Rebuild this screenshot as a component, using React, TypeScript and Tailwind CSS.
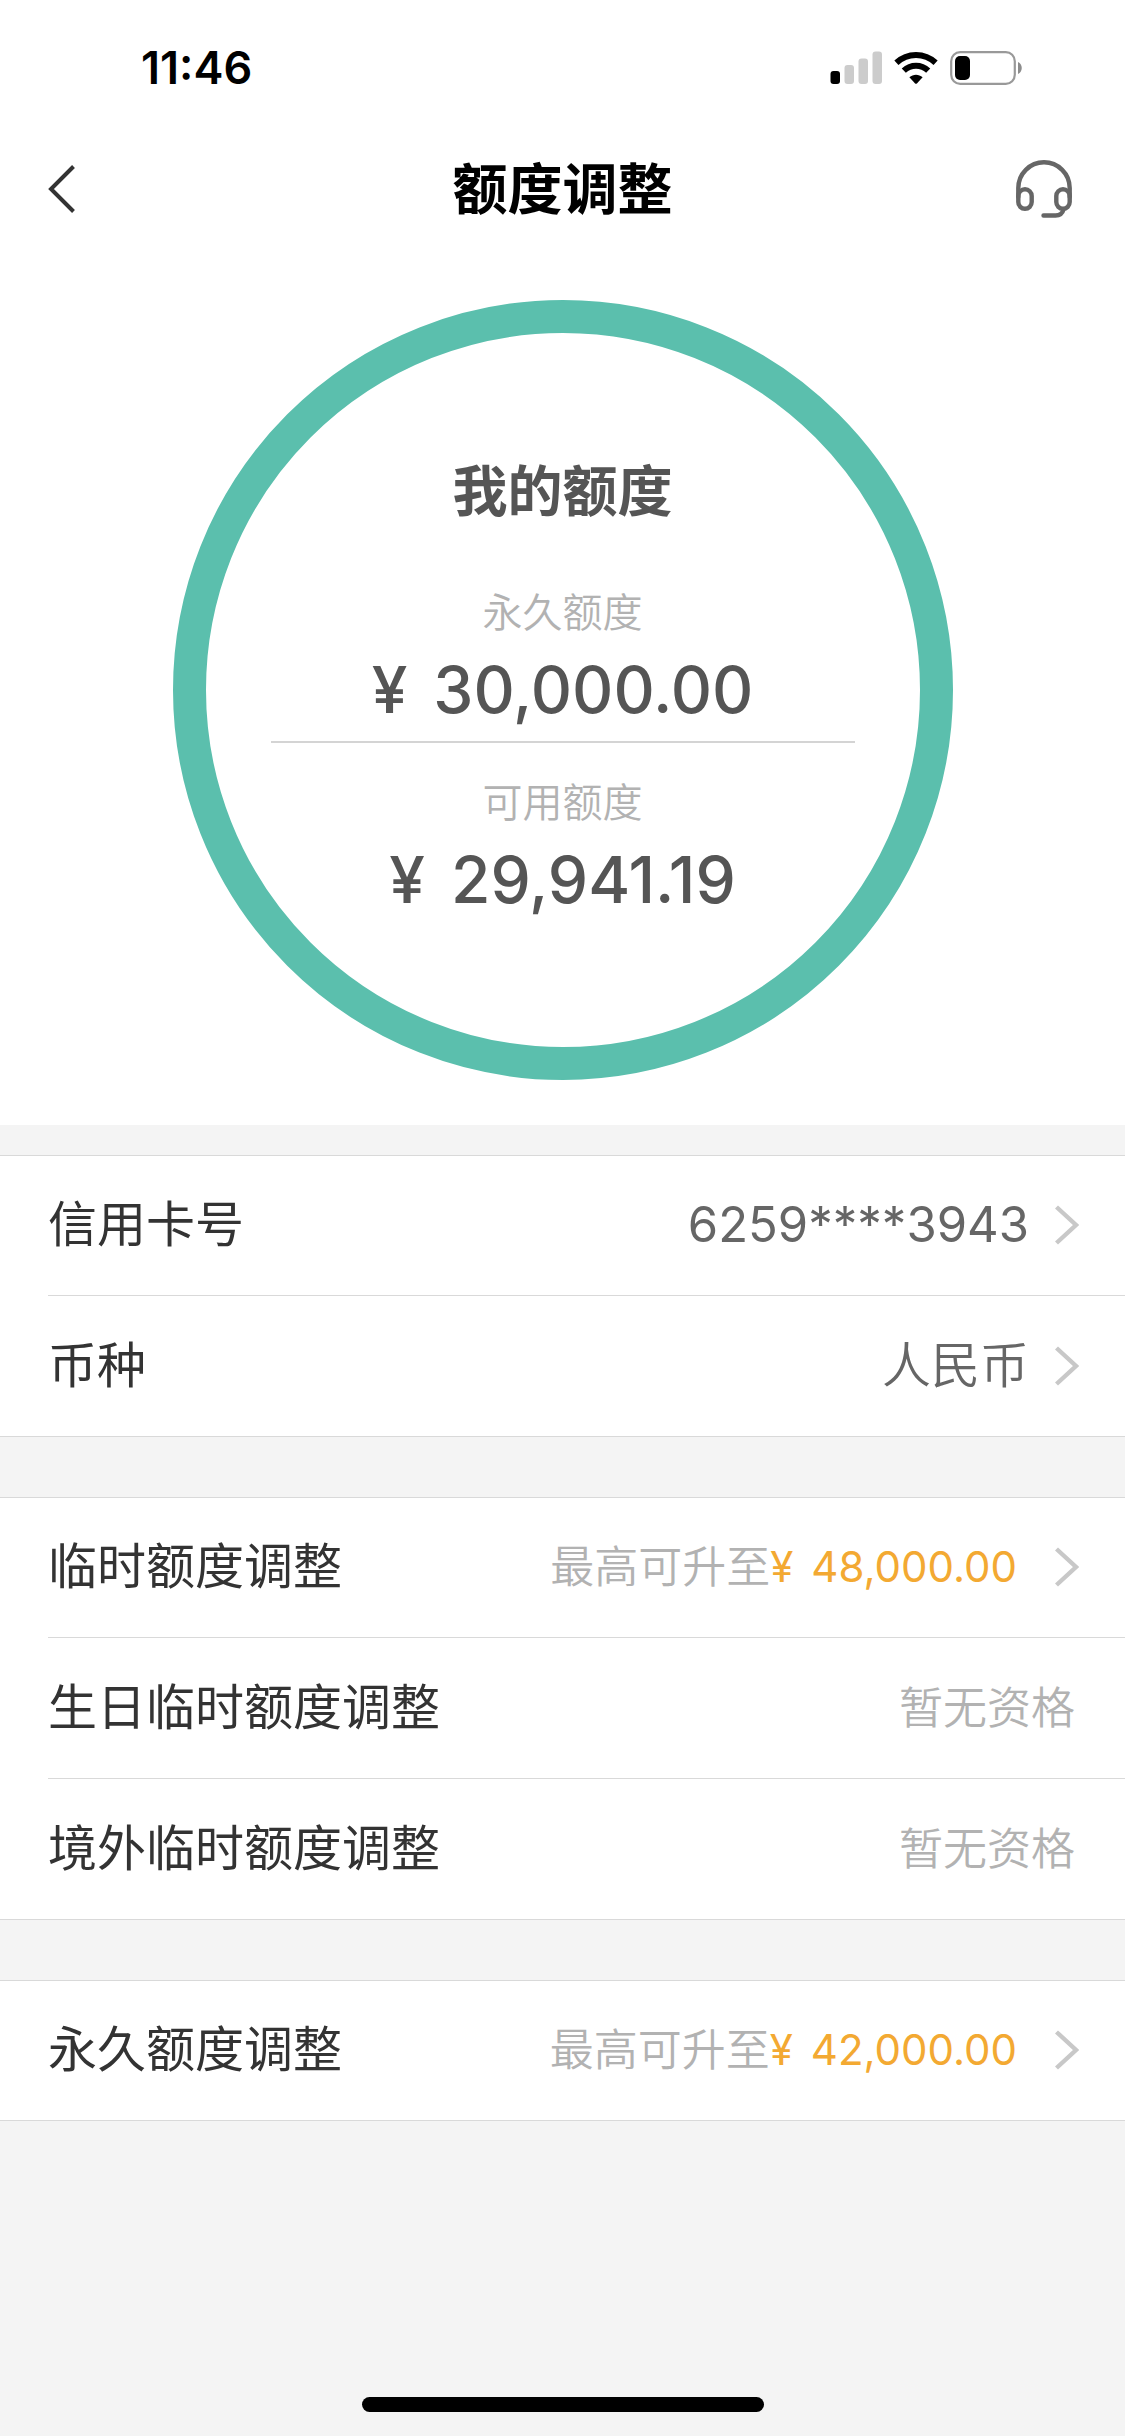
import React from "react";

function SignalIcon() {
  return (
    <svg className="h-[34px] w-[52px]" viewBox="0 0 52 34" aria-hidden="true">
      <rect x="0.5" y="20" width="9.5" height="13" rx="3" fill="#000" />
      <rect x="14.5" y="14" width="9.5" height="19" rx="3" fill="#ccc" />
      <rect x="28.5" y="7.5" width="9.5" height="25.5" rx="3" fill="#ccc" />
      <rect x="42.5" y="0.5" width="9.5" height="32.5" rx="3" fill="#ccc" />
    </svg>
  );
}

function WifiIcon() {
  return (
    <svg className="h-[34px] w-[44px]" viewBox="0 0 44 34" aria-hidden="true">
      <g fill="none" stroke="#000" strokeWidth="6">
        <path d="M2.4 11.8C13.5 1.4 30.5 1.4 41.6 11.8" />
        <path d="M9.8 19.6C16.8 13 27.2 13 34.2 19.6" />
      </g>
      <path d="M15.4 26.3C19.2 22.8 24.8 22.8 28.6 26.3L22.9 32.4Q22 33.3 21.1 32.4Z" fill="#000" />
    </svg>
  );
}

function BatteryIcon() {
  return (
    <svg className="h-[34px] w-[72px]" viewBox="0 0 72 34" aria-hidden="true">
      <rect x="1.2" y="1.2" width="63.6" height="31.6" rx="9" fill="none" stroke="#999" strokeWidth="2.2" />
      <rect x="5" y="5" width="15" height="24" rx="5" fill="#000" />
      <path d="M68 11C73 13 73 21 68 23Z" fill="#8c8c8c" />
    </svg>
  );
}

function HeadsetIcon() {
  return (
    <svg className="h-[58px] w-[56px]" viewBox="0 0 56 58" fill="none" stroke="#666" strokeWidth="4.4" strokeLinecap="round" aria-hidden="true">
      <path d="M2.3 37V28A25.7 25.7 0 0 1 53.7 28V37" />
      <rect x="2.3" y="29.3" width="13.4" height="19.5" rx="6.7" />
      <rect x="40.3" y="29.3" width="13.4" height="19.5" rx="6.7" />
      <path d="M47.5 49.5Q46 55.5 39.5 55.5H27.5" />
    </svg>
  );
}

function BackIcon() {
  return (
    <svg className="h-[48px] w-[28px]" viewBox="0 0 28 48" fill="none" stroke="#333" strokeWidth="4" aria-hidden="true">
      <path d="M25.5 1.5L3 24L25.5 46.5" />
    </svg>
  );
}

function ChevronIcon() {
  return (
    <svg className="h-[40px] w-[24px] shrink-0" viewBox="0 0 24 40" fill="none" stroke="#c8c8c8" strokeWidth="4.4" aria-hidden="true">
      <path d="M1.5 2L21 20L1.5 38" />
    </svg>
  );
}

type Item = {
  label: string;
  number?: string;
  value?: string;
  note?: string;
  amount?: string;
};

const groups: Item[][] = [
  [
    { label: "信用卡号", number: "6259****3943" },
    { label: "币种", value: "人民币" },
  ],
  [
    { label: "临时额度调整", note: "最高可升至", amount: "48,000.00" },
    { label: "生日临时额度调整", note: "暂无资格" },
    { label: "境外临时额度调整", note: "暂无资格" },
  ],
  [{ label: "永久额度调整", note: "最高可升至", amount: "42,000.00" }],
];

const limits = [
  { label: "永久额度", amount: "30,000.00" },
  { label: "可用额度", amount: "29,941.19" },
];

function Row({ item, first }: { item: Item; first: boolean }) {
  const size = first ? "min-h-[139px]" : "min-h-[140px] border-t border-[#d9d9d9]";
  const line = "flex w-full items-center justify-between pb-px text-left ";
  const label = <span className="text-[49px] leading-[60px] text-[#333]">{item.label}</span>;

  if (item.note && !item.amount) {
    return (
      <li className={"flex box-content " + size}>
        <div className={line + "pr-[50px]"}>
          {label}
          <span className="text-[44px] leading-[60px] font-[350] text-[#b2b2b2]">{item.note}</span>
        </div>
      </li>
    );
  }

  return (
    <li className={"flex box-content " + size}>
      <button type="button" className={line + "pr-[46px]"}>
        {label}
        {item.amount ? (
          <span className="flex items-center gap-[38px] text-[44px] leading-[60px] font-[350] text-[#b2b2b2]">
            <span className="flex items-center">
              {item.note}
              <span className="flex gap-[18px] text-[42px] font-normal text-[#f3a932]">
                <span>¥</span>
                <span>{item.amount}</span>
              </span>
            </span>
            <ChevronIcon />
          </span>
        ) : (
          <span className="flex items-center gap-[26px] text-[49px] leading-[60px] text-[#666]">
            {item.number && <span>{item.number}</span>}
            {item.value && <span className="font-[350]">{item.value}</span>}
            <ChevronIcon />
          </span>
        )}
      </button>
    </li>
  );
}

export default function App() {
  return (
    <div className="flex min-h-screen flex-col bg-[#f4f4f4] font-['Inter','Noto_Sans_CJK_SC',sans-serif]">
      <div className="bg-white pb-[45px]">
        <div className="flex h-[136px] items-center justify-between pr-[103px] pl-[141px]">
          <time className="text-[45px] leading-[60px] font-semibold text-black">11:46</time>
          <div className="flex items-center gap-3">
            <SignalIcon />
            <WifiIcon />
            <BatteryIcon />
          </div>
        </div>

        <header className="grid h-[108px] grid-cols-[1fr_auto_1fr] items-center pb-0.5">
          <button type="button" aria-label="返回" className="justify-self-start pl-12">
            <BackIcon />
          </button>
          <h1 className="text-[55px] leading-[72px] font-bold text-black">额度调整</h1>
          <button type="button" aria-label="客服" className="justify-self-end pr-[53px]">
            <HeadsetIcon />
          </button>
        </header>

        <section className="mx-auto mt-14 flex size-[780px] flex-col items-center rounded-full border-[33px] border-[#5bbfad] pt-[122px] text-center">
          <h2 className="text-[55px] leading-[72px] font-bold text-[#555]">我的额度</h2>
          <dl className="mt-14 w-[584px] divide-y-2 divide-[#d4d4d4]">
            {limits.map((limit) => (
              <div key={limit.label} className="pb-[11px] not-first:pt-[30px]">
                <dt className="text-[40px] leading-[60px] font-[350] text-[#b2b2b2]">{limit.label}</dt>
                <dd className="mt-[7px] flex justify-center gap-[26px] text-[64px] leading-[80px] font-[550] text-[#555]">
                  <span>¥</span>
                  <span>{limit.amount}</span>
                </dd>
              </div>
            ))}
          </dl>
        </section>
      </div>

      <main className="mt-[30px] flex flex-col gap-[60px]">
        {groups.map((items) => (
          <ul key={items[0].label} className="border-y border-[#d9d9d9] bg-white pl-12">
            {items.map((item, index) => (
              <Row key={item.label} item={item} first={index === 0} />
            ))}
          </ul>
        ))}
      </main>

      <div className="mx-auto mt-auto mb-6 h-[15px] w-[402px] rounded-full bg-black" />
    </div>
  );
}
